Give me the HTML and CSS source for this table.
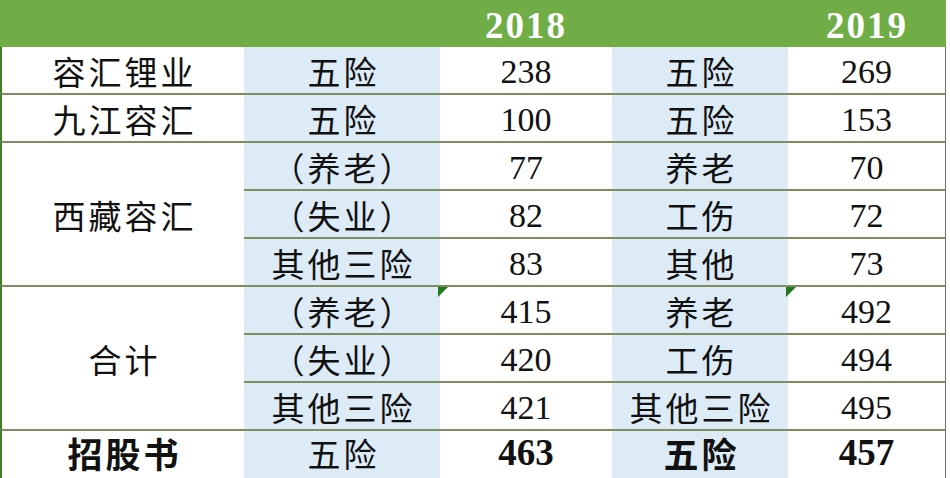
FILE: index.html
```html
<!DOCTYPE html>
<html lang="zh">
<head>
<meta charset="utf-8">
<link rel="stylesheet" href="styles.css">
</head>
<body>
<table class="sheet">
  <colgroup>
    <col class="c1"><col class="c2"><col class="c3"><col class="c4"><col class="c5">
  </colgroup>
  <thead>
    <tr class="head">
      <th></th><th></th><th class="year">2018</th><th></th><th class="year">2019</th>
    </tr>
  </thead>
  <tbody>
    <tr>
      <td class="name">容汇锂业</td><td class="blue cn">五险</td><td class="num">238</td><td class="blue cn">五险</td><td class="num last">269</td>
    </tr>
    <tr>
      <td class="name">九江容汇</td><td class="blue cn">五险</td><td class="num">100</td><td class="blue cn">五险</td><td class="num last">153</td>
    </tr>
    <tr>
      <td class="name" rowspan="3">西藏容汇</td><td class="blue cn">（养老）</td><td class="num">77</td><td class="blue cn">养老</td><td class="num last">70</td>
    </tr>
    <tr>
      <td class="blue cn">（失业）</td><td class="num">82</td><td class="blue cn">工伤</td><td class="num last">72</td>
    </tr>
    <tr>
      <td class="blue cn">其他三险</td><td class="num">83</td><td class="blue cn">其他</td><td class="num last">73</td>
    </tr>
    <tr>
      <td class="name" rowspan="3">合计</td><td class="blue cn">（养老）</td><td class="num flag"><span class="tri"></span>415</td><td class="blue cn">养老</td><td class="num last flag"><span class="tri"></span>492</td>
    </tr>
    <tr>
      <td class="blue cn">（失业）</td><td class="num">420</td><td class="blue cn">工伤</td><td class="num last">494</td>
    </tr>
    <tr>
      <td class="blue cn">其他三险</td><td class="num">421</td><td class="blue cn">其他三险</td><td class="num last">495</td>
    </tr>
    <tr class="total">
      <td class="name bold">招股书</td><td class="blue cn">五险</td><td class="num bold">463</td><td class="blue cn bold">五险</td><td class="num last bold">457</td>
    </tr>
  </tbody>
</table>
</body>
</html>
```
FILE: styles.css
```css
html, body {
  margin: 0;
  padding: 0;
  background: #ffffff;
}

.sheet {
  border-collapse: separate;
  border-spacing: 0;
  table-layout: fixed;
  width: 946px;
  color: #111111;
}

.c1 { width: 244px; }
.c2 { width: 196px; }
.c3 { width: 172px; }
.c4 { width: 176px; }
.c5 { width: 158px; }

.head th {
  background: #70ad47;
  padding: 4px 0 0 0;
  line-height: 43px;
  font-size: 20px;
}

.head th.year {
  font-family: "Liberation Serif", "DejaVu Serif", serif;
  font-weight: bold;
  font-size: 37px;
  letter-spacing: 2px;
  color: #ffffff;
  vertical-align: middle;
}

td {
  padding: 3px 0 0 0;
  line-height: 43px;
  text-align: center;
  vertical-align: middle;
  border-bottom: 2px solid #7f8c60;
  white-space: nowrap;
}

.name {
  font-family: "Noto Sans CJK SC", "Noto Sans", sans-serif;
  font-size: 33px;
  letter-spacing: 3px;
  padding-left: 3px;
  border-left: 2px solid #3f7f25;
}

.cn {
  font-family: "Noto Sans CJK SC", "Noto Sans", sans-serif;
  font-size: 33px;
  letter-spacing: 3px;
  padding-left: 3px;
}

.blue {
  background: #ddebf7;
}

.num {
  font-family: "Liberation Serif", "DejaVu Serif", serif;
  font-size: 34px;
}

.last {
  border-right: 1px solid #6b6b6b;
}

.bold {
  font-weight: bold;
}

.num.bold {
  font-size: 37px;
}

.name.bold, .cn.bold {
  font-size: 35px;
}

.total td {
  border-bottom: none;
  padding-top: 2px;
  padding-bottom: 6px;
  line-height: 40px;
}

.flag {
  position: relative;
}

.tri {
  position: absolute;
  left: -2px;
  top: 0;
  width: 0;
  height: 0;
  border-top: 10px solid #1f7a1f;
  border-right: 10px solid transparent;
}
```
